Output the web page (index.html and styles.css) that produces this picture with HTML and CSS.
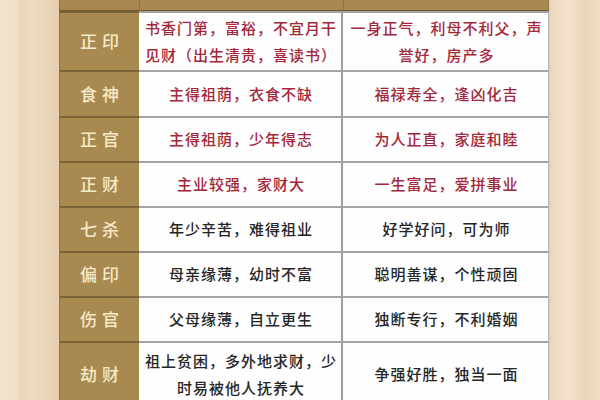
FILE: index.html
```html
<!DOCTYPE html>
<html lang="zh">
<head>
<meta charset="utf-8">
<link rel="stylesheet" href="styles.css">
</head>
<body>
<div class="page">
  <div class="table">
    <div class="hd"></div><div class="hd mid"></div><div class="hd last"></div>

    <div class="row r59"><div class="god">正印</div><div class="cell mid red">书香门第，富裕，不宜月干见财（出生清贵，喜读书）</div><div class="cell red">一身正气，利母不利父，声誉好，房产多</div></div>
    <div class="row r46"><div class="god">食神</div><div class="cell mid red">主得祖荫，衣食不缺</div><div class="cell red">福禄寿全，逢凶化吉</div></div>
    <div class="row"><div class="god">正官</div><div class="cell mid red">主得祖荫，少年得志</div><div class="cell red">为人正直，家庭和睦</div></div>
    <div class="row"><div class="god">正财</div><div class="cell mid red">主业较强，家财大</div><div class="cell red">一生富足，爱拼事业</div></div>
    <div class="row"><div class="god">七杀</div><div class="cell mid">年少辛苦，难得祖业</div><div class="cell">好学好问，可为师</div></div>
    <div class="row"><div class="god">偏印</div><div class="cell mid">母亲缘薄，幼时不富</div><div class="cell">聪明善谋，个性顽固</div></div>
    <div class="row"><div class="god">伤官</div><div class="cell mid">父母缘薄，自立更生</div><div class="cell">独断专行，不利婚姻</div></div>
    <div class="row r65"><div class="god">劫财</div><div class="cell mid">祖上贫困，多外地求财，少时易被他人抚养大</div><div class="cell">争强好胜，独当一面</div></div>
  </div>
</div>
</body>
</html>
```

FILE: styles.css
```css
html, body {
  margin: 0;
  padding: 0;
}
body {
  width: 600px;
  height: 400px;
  overflow: hidden;
  font-family: "Noto Sans CJK SC", "Noto Sans", sans-serif;
  background:
    linear-gradient(to right,
      #f4e4cf 0px, #f2e0c9 16px, #ead3b6 22px, #efdbc1 30px, #ecd6ba 45px, #e7cfb0 58px,
      #e7cfb0 549px, #eed9bf 552px, #f3e2cc 570px, #ecd5b8 585px, #f1dec6 600px);
}
.page {
  display: flex;
  padding-left: 59px;
}
.table {
  width: 490px;
  display: grid;
  grid-template-columns: 80px 204px 206px;
  grid-template-rows: 11px;
}
.hd {
  background: #a9894f;
  border-bottom: 1px solid #6e5834;
  border-left: 1px solid #8f7443;
}
.hd.last { border-right: 1px solid #8f7443; }
.row {
  display: contents;
}
.row > div {
  height: 45px;
  box-sizing: border-box;
  display: flex;
  align-items: center;
  justify-content: center;
  text-align: center;
}
.row.r59 > div { height: 59px; }
.row.r46 > div { height: 46px; }
.row.r65 > div { height: 65px; }
.god {
  background: #a88a51;
  border-top: 2px solid #7a6236;
  border-left: 1px solid #8e7342;
  color: #f5e9c8;
  font-size: 17px;
  font-weight: 500;
  letter-spacing: 5px;
  padding-left: 5px;
  padding-bottom: 2px;
}
.cell {
  background: #fefefe;
  border-top: 2px solid #a4a4a4;
  border-right: 1px solid #b5b5b5;
  color: #262626;
  font-size: 15px;
  font-weight: 500;
  letter-spacing: 1px;
  line-height: 27px;
  padding: 0 4px 2px 6px;
}
.cell.mid {
  border-right: 2px solid #9d9d9d;
}
.red {
  color: #a3283a;
}
```
